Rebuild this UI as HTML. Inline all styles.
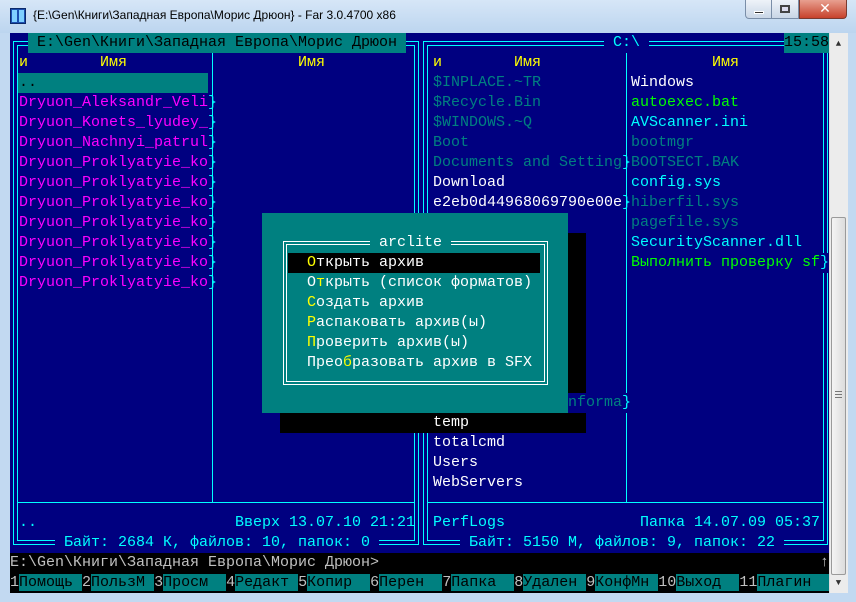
<!DOCTYPE html>
<html><head><meta charset="utf-8"><style>
*{margin:0;padding:0;box-sizing:border-box}
body{width:856px;height:602px;overflow:hidden;background:#c2d9f1;position:relative;font-family:"Liberation Mono","DejaVu Sans Mono",monospace}
.a{position:absolute}
.t{position:absolute;height:20px;line-height:20px;white-space:pre;font-size:15px;font-family:"Liberation Mono","DejaVu Sans Mono",monospace}
.c{color:#00ffff}.y{color:#ffff00}.m{color:#ff00ff}.tl{color:#008080}.w{color:#ffffff}.g{color:#00ff00}.k{color:#000}.gr{color:#c0c0c0}
.hl{position:absolute;height:1px;background:#00ffff}
.vl{position:absolute;width:1px;background:#00ffff}
</style></head><body>
<!-- window chrome -->
<div class="a" style="left:0;top:0;width:856px;height:33px;background:linear-gradient(#d6e6f7,#bcd5ef)"></div>
<div class="a" style="left:10px;top:8px;width:16px;height:16px;background:#1a4fb0;border:1px solid #0c2a6a"></div>
<div class="a" style="left:12px;top:10px;width:5px;height:12px;background:#7fd0ff"></div>
<div class="a" style="left:19px;top:10px;width:5px;height:12px;background:#7fd0ff"></div>
<div class="a" style="left:33px;top:8px;font:12px 'Liberation Sans','DejaVu Sans',sans-serif;color:#000">{E:\Gen\Книги\Западная Европа\Морис Дрюон} - Far 3.0.4700 x86</div>
<div class="a" style="left:745px;top:0;width:27px;height:19px;background:linear-gradient(#eef3f9,#c9d6e6);border:1px solid #7a8ea8;border-top:none;border-radius:0 0 0 4px"></div>
<div class="a" style="left:754px;top:11px;width:10px;height:3px;background:#333;border:1px solid #fff"></div>
<div class="a" style="left:772px;top:0;width:27px;height:19px;background:linear-gradient(#eef3f9,#c9d6e6);border:1px solid #7a8ea8;border-top:none;border-left:none"></div>
<div class="a" style="left:780px;top:5px;width:10px;height:8px;border:2px solid #444;background:#dde"></div>
<div class="a" style="left:799px;top:0;width:48px;height:19px;background:linear-gradient(#e8a090,#c7422c);border:1px solid #7a3a30;border-top:none;border-radius:0 0 4px 0"></div>
<div class="a" style="left:815px;top:0;width:20px;height:19px;color:#fff;font:bold 14px 'DejaVu Sans',sans-serif;text-align:center;line-height:19px">✕</div>
<!-- console -->
<div class="a" style="left:10px;top:33px;width:820px;height:520px;background:#000080"></div>
<div class="a" style="left:10px;top:553px;width:820px;height:40px;background:#000"></div>
<!-- scrollbar -->
<div class="a" style="left:829px;top:33px;width:19px;height:560px;background:#ececec;border-left:1px solid #ddd"></div>
<div class="a t" style="left:829px;top:38px;width:19px;font-size:9px;text-align:center;color:#333;height:12px;line-height:12px">▲</div>
<div class="a t" style="left:829px;top:577px;width:19px;font-size:9px;text-align:center;color:#333;height:12px;line-height:12px">▼</div>
<div class="a" style="left:831px;top:217px;width:15px;height:358px;background:linear-gradient(90deg,#f4f4f4,#dcdcdc);border:1px solid #9a9a9a;border-radius:2px"></div>
<div class="a" style="left:835px;top:391px;width:7px;height:7px;border-top:1px solid #777;border-bottom:1px solid #777"></div>
<div class="a" style="left:835px;top:394px;width:7px;height:1px;background:#777"></div>

<!-- left panel borders -->
<div class="hl" style="left:13px;top:41px;width:406px"></div>
<div class="hl" style="left:17px;top:45px;width:398px"></div>
<div class="hl" style="left:13px;top:544px;width:406px"></div>
<div class="hl" style="left:17px;top:540px;width:398px"></div>
<div class="vl" style="left:13px;top:41px;height:504px"></div>
<div class="vl" style="left:17px;top:45px;height:496px"></div>
<div class="vl" style="left:418px;top:41px;height:504px"></div>
<div class="vl" style="left:414px;top:45px;height:496px"></div>
<div class="hl" style="left:17px;top:502px;width:398px"></div>
<div class="vl" style="left:212px;top:53px;height:449px"></div>
<!-- right panel borders -->
<div class="hl" style="left:423px;top:41px;width:405px"></div>
<div class="hl" style="left:427px;top:45px;width:397px"></div>
<div class="hl" style="left:423px;top:544px;width:405px"></div>
<div class="hl" style="left:427px;top:540px;width:397px"></div>
<div class="vl" style="left:423px;top:41px;height:504px"></div>
<div class="vl" style="left:427px;top:45px;height:496px"></div>
<div class="vl" style="left:827px;top:41px;height:504px"></div>
<div class="vl" style="left:823px;top:45px;height:496px"></div>
<div class="hl" style="left:427px;top:502px;width:397px"></div>
<div class="vl" style="left:626px;top:53px;height:449px"></div>

<!-- titles -->
<div class="t k" style="left:28px;top:33px;width:378px;background:#008080"> E:\Gen\Книги\Западная Европа\Морис Дрюон</div>
<div class="t c" style="left:604px;top:33px;background:#000080"> C:\ </div>
<div class="t k" style="left:784px;top:33px;width:45px;background:#008080">15:58</div>

<!-- headers -->
<div class="t y" style="left:19px;top:53px">и</div>
<div class="t y" style="left:100px;top:53px">Имя</div>
<div class="t y" style="left:298px;top:53px">Имя</div>
<div class="t y" style="left:433px;top:53px">и</div>
<div class="t y" style="left:514px;top:53px">Имя</div>
<div class="t y" style="left:712px;top:53px">Имя</div>

<!-- left list -->
<div class="a" style="left:18px;top:73px;width:190px;height:20px;background:#008080"></div>
<div class="t k" style="left:19px;top:73px">..</div>
<div class="t m" style="left:19px;top:93px">Dryuon_Aleksandr_Veli<span class="c">}</span></div>
<div class="t m" style="left:19px;top:113px">Dryuon_Konets_lyudey_<span class="c">}</span></div>
<div class="t m" style="left:19px;top:133px">Dryuon_Nachnyi_patrul<span class="c">}</span></div>
<div class="t m" style="left:19px;top:153px">Dryuon_Proklyatyie_ko<span class="c">}</span></div>
<div class="t m" style="left:19px;top:173px">Dryuon_Proklyatyie_ko<span class="c">}</span></div>
<div class="t m" style="left:19px;top:193px">Dryuon_Proklyatyie_ko<span class="c">}</span></div>
<div class="t m" style="left:19px;top:213px">Dryuon_Proklyatyie_ko<span class="c">}</span></div>
<div class="t m" style="left:19px;top:233px">Dryuon_Proklyatyie_ko<span class="c">}</span></div>
<div class="t m" style="left:19px;top:253px">Dryuon_Proklyatyie_ko<span class="c">}</span></div>
<div class="t m" style="left:19px;top:273px">Dryuon_Proklyatyie_ko<span class="c">}</span></div>

<!-- right list col1 -->
<div class="t tl" style="left:433px;top:73px">$INPLACE.~TR</div>
<div class="t tl" style="left:433px;top:93px">$Recycle.Bin</div>
<div class="t tl" style="left:433px;top:113px">$WINDOWS.~Q</div>
<div class="t tl" style="left:433px;top:133px">Boot</div>
<div class="t tl" style="left:433px;top:153px">Documents and Setting<span class="c">}</span></div>
<div class="t w" style="left:433px;top:173px">Download</div>
<div class="t w" style="left:433px;top:193px">e2eb0d44968069790e00e<span class="c">}</span></div>
<div class="t w" style="left:433px;top:433px">totalcmd</div>
<div class="t w" style="left:433px;top:453px">Users</div>
<div class="t w" style="left:433px;top:473px">WebServers</div>
<!-- right list col2 -->
<div class="t w" style="left:631px;top:73px">Windows</div>
<div class="t g" style="left:631px;top:93px">autoexec.bat</div>
<div class="t c" style="left:631px;top:113px">AVScanner.ini</div>
<div class="t tl" style="left:631px;top:133px">bootmgr</div>
<div class="t tl" style="left:631px;top:153px">BOOTSECT.BAK</div>
<div class="t c" style="left:631px;top:173px">config.sys</div>
<div class="t tl" style="left:631px;top:193px">hiberfil.sys</div>
<div class="t tl" style="left:631px;top:213px">pagefile.sys</div>
<div class="t c" style="left:631px;top:233px">SecurityScanner.dll</div>
<div class="t g" style="left:631px;top:253px;background:#000080">Выполнить проверку sf<span class="c">}</span></div>

<!-- status -->
<div class="t c" style="left:19px;top:513px">..</div>
<div class="t c" style="left:235px;top:513px">Вверх 13.07.10 21:21</div>
<div class="t c" style="left:433px;top:513px">PerfLogs</div>
<div class="t c" style="left:640px;top:513px">Папка 14.07.09 05:37</div>
<div class="t c" style="left:55px;top:533px;background:#000080"> Байт: 2684 К, файлов: 10, папок: 0 </div>
<div class="t c" style="left:460px;top:533px;background:#000080"> Байт: 5150 М, файлов: 9, папок: 22 </div>

<!-- dialog shadow -->
<div class="a" style="left:280px;top:233px;width:306px;height:160px;background:#000"></div>
<div class="a" style="left:280px;top:413px;width:306px;height:20px;background:#000"></div>
<div class="t w" style="left:433px;top:413px">temp</div>
<div class="t tl" style="left:568px;top:393px;background:#000080">nforma<span class="c">}</span></div>
<!-- dialog -->
<div class="a" style="left:262px;top:213px;width:306px;height:200px;background:#008080"></div>
<div class="a" style="left:283px;top:241px;width:265px;height:144px;border:1px solid #fff"></div>
<div class="a" style="left:286px;top:244px;width:259px;height:138px;border:1px solid #fff"></div>
<div class="t w" style="left:370px;top:233px;background:#008080"> arclite </div>
<div class="a" style="left:288px;top:253px;width:252px;height:20px;background:#000"></div>
<div class="t w" style="left:307px;top:253px"><span class="y">О</span>ткрыть архив</div>
<div class="t w" style="left:307px;top:273px">О<span class="y">т</span>крыть (список форматов)</div>
<div class="t w" style="left:307px;top:293px"><span class="y">С</span>оздать архив</div>
<div class="t w" style="left:307px;top:313px"><span class="y">Р</span>аспаковать архив(ы)</div>
<div class="t w" style="left:307px;top:333px"><span class="y">П</span>роверить архив(ы)</div>
<div class="t w" style="left:307px;top:353px">Прео<span class="y">б</span>разовать архив в SFX</div>

<!-- command line -->
<div class="t gr" style="left:10px;top:553px">E:\Gen\Книги\Западная Европа\Морис Дрюон&gt;</div>
<div class="t gr" style="left:820px;top:553px">↑</div>
<!-- keybar -->
<div class="t gr" style="left:10px;top:573px">1<span class="k" style="background:#008080">Помощь </span>2<span class="k" style="background:#008080">ПользМ </span>3<span class="k" style="background:#008080">Просм  </span>4<span class="k" style="background:#008080">Редакт </span>5<span class="k" style="background:#008080">Копир  </span>6<span class="k" style="background:#008080">Перен  </span>7<span class="k" style="background:#008080">Папка  </span>8<span class="k" style="background:#008080">Удален </span>9<span class="k" style="background:#008080">КонфМн </span>10<span class="k" style="background:#008080">Выход  </span>11<span class="k" style="background:#008080">Плагин </span><span style="background:#008080"> </span></div>
</body></html>
